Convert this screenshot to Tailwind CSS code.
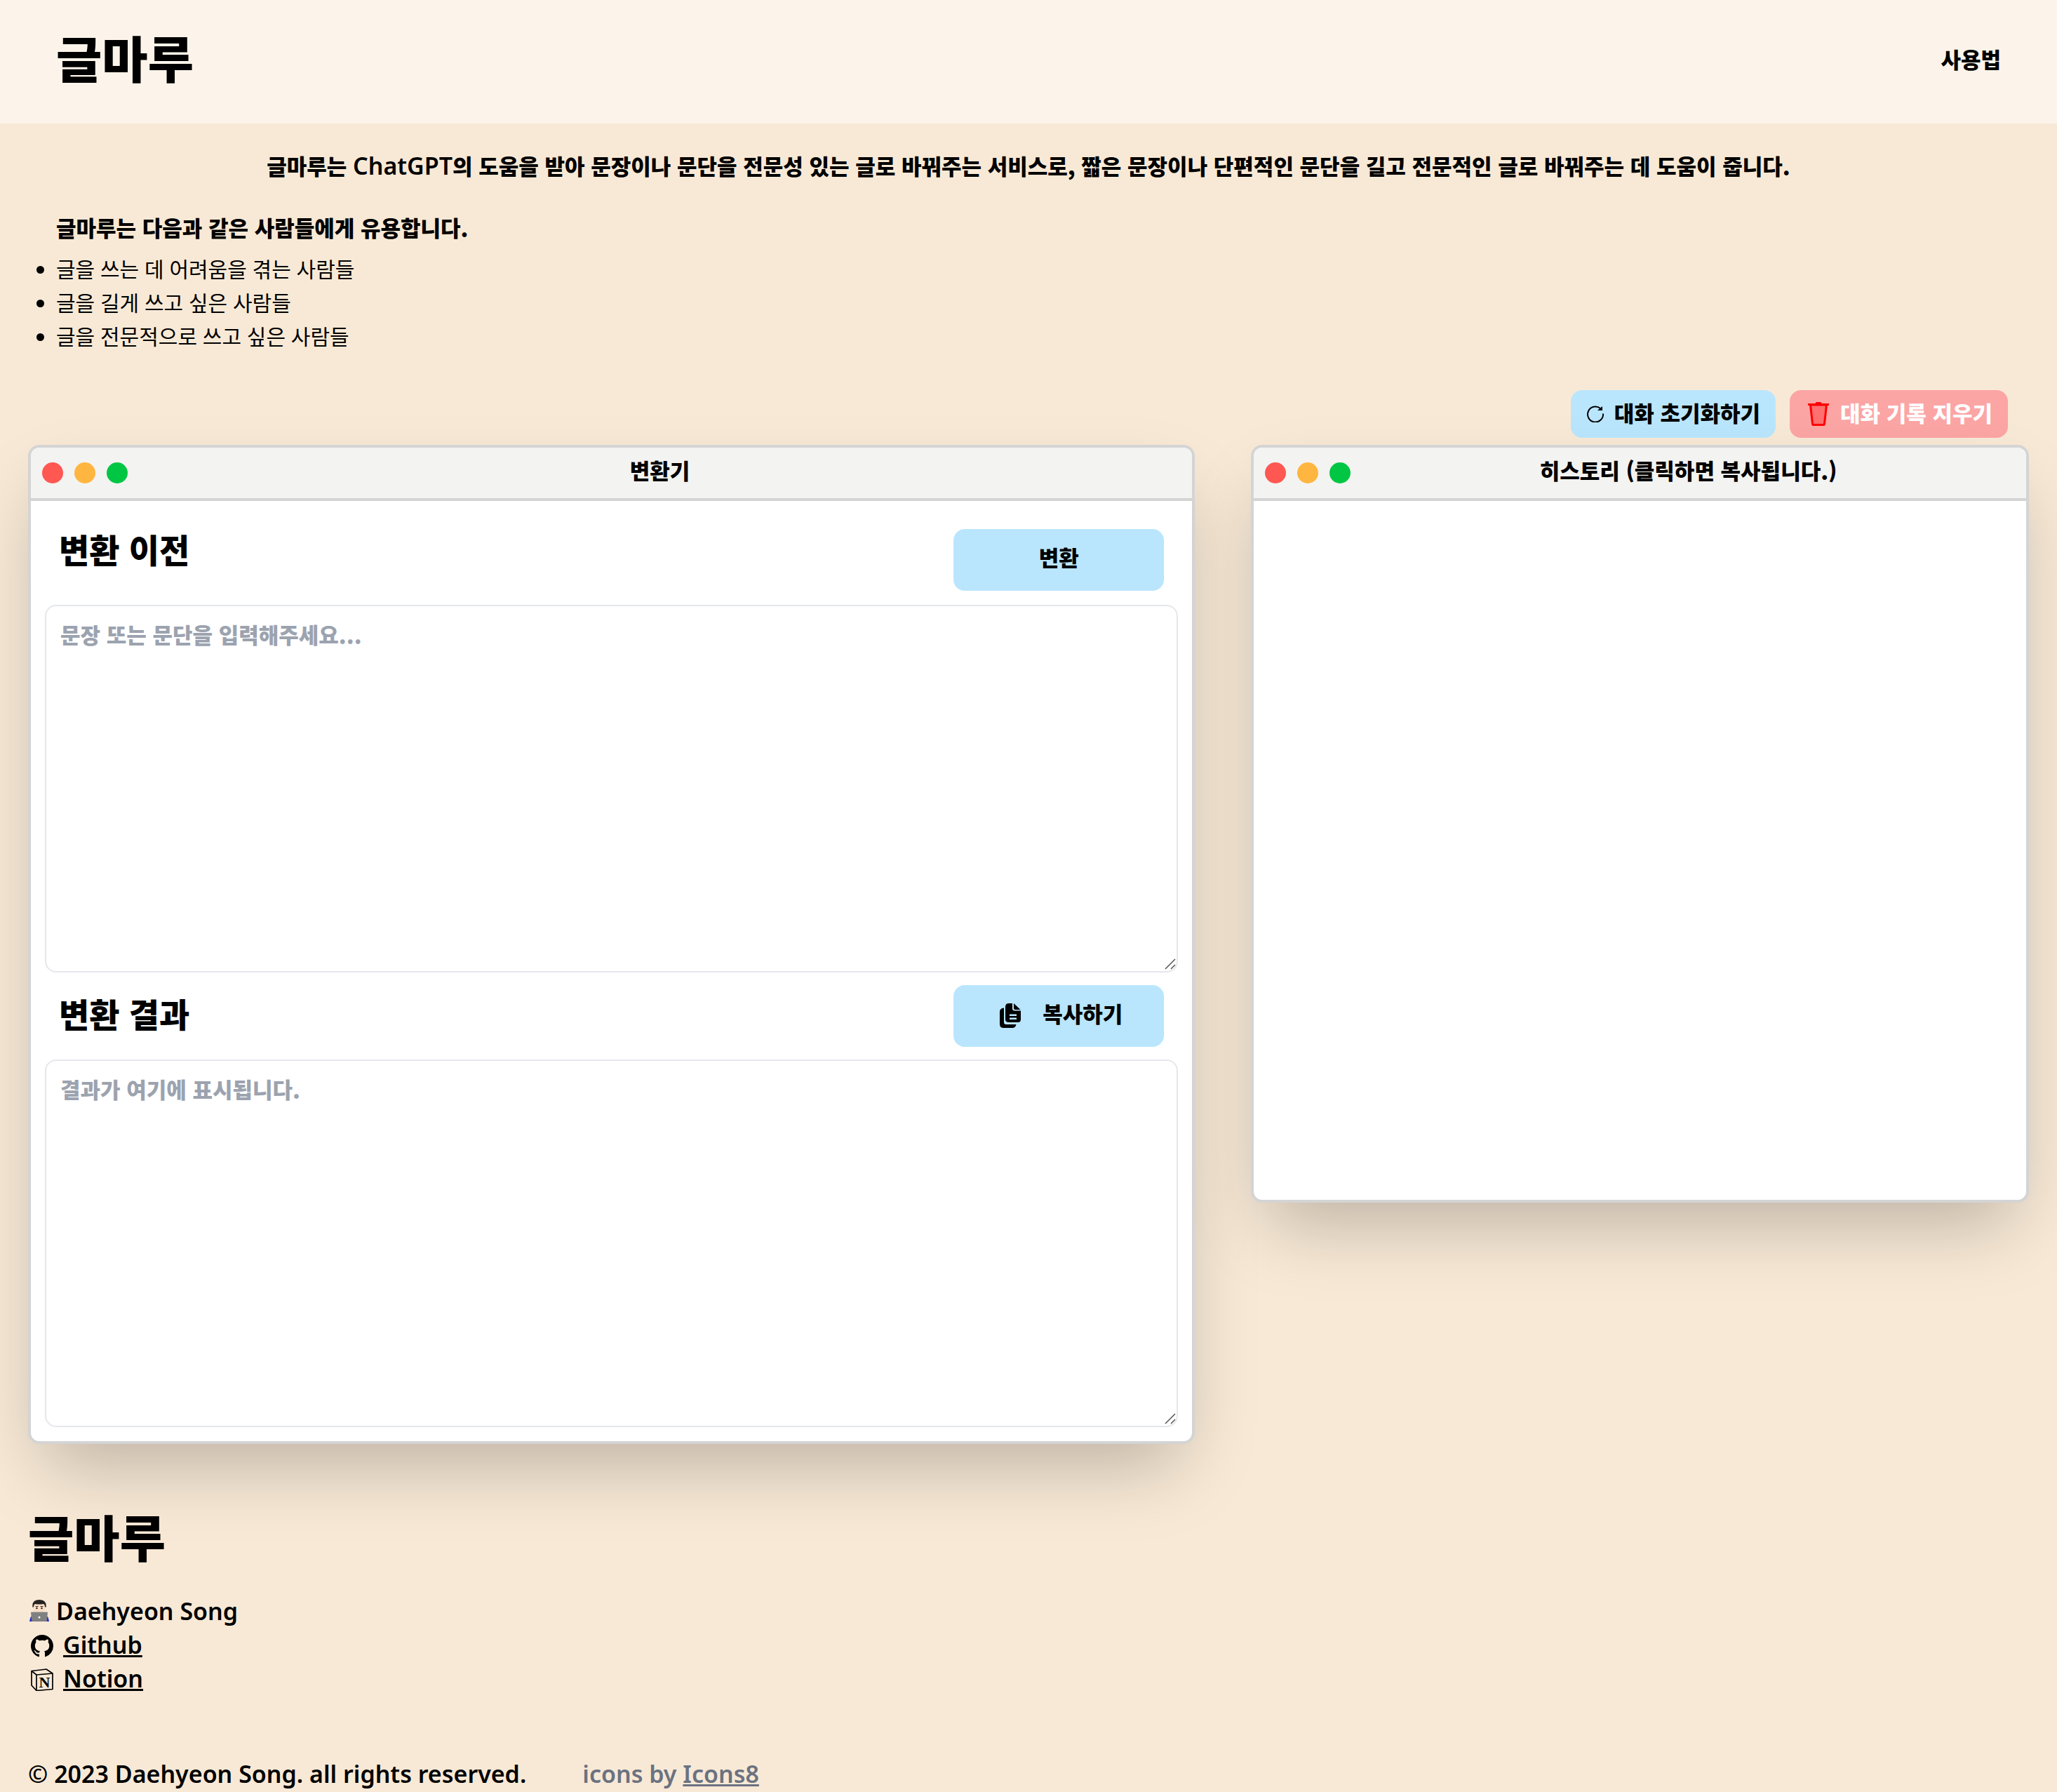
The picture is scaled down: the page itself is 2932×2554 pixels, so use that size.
<!DOCTYPE html>
<html lang="ko">
<head>
<meta charset="utf-8">
<meta name="viewport" content="width=device-width, initial-scale=1">
<title>글마루</title>
<script src="https://cdn.jsdelivr.net/npm/@tailwindcss/browser@4"></script>
</head>
<body class="min-h-screen bg-[#f8e9d6] text-[31px] leading-[48px] font-black text-black font-['Noto_Sans_CJK_KR',sans-serif]">

<header class="flex items-center justify-between bg-[#fcf4ea] px-20 pt-10 pb-14">
  <h1 class="text-[71px] leading-[80px]">글마루</h1>
  <nav class="pt-2"><a href="#usage">사용법</a></nav>
</header>

<main class="px-10 pt-9">
  <p class="text-center">글마루는 <span class="text-[34px] leading-none font-semibold font-['Noto_Sans',sans-serif]">ChatGPT</span>의 도움을 받아 문장이나 문단을 전문성 있는 글로 바꿔주는 서비스로, 짧은 문장이나 단편적인 문단을 길고 전문적인 글로 바꿔주는 데 도움이 줍니다.</p>

  <section class="pt-10">
    <h2 class="px-10">글마루는 다음과 같은 사람들에게 유용합니다.</h2>
    <ul class="list-disc pt-3 pl-10 text-[30px] font-normal font-['Noto_Sans','Noto_Sans_CJK_KR',sans-serif]">
      <li>글을 쓰는 데 어려움을 겪는 사람들</li>
      <li>글을 길게 쓰고 싶은 사람들</li>
      <li>글을 전문적으로 쓰고 싶은 사람들</li>
    </ul>
  </section>

  <div class="flex justify-end gap-5 pt-13 pr-[30px] pb-[10px]">
    <button type="button" class="flex items-center gap-3 rounded-2xl bg-[#bae6fd] px-[22px] pt-2 pb-3">
      <svg class="mt-1 h-6 w-7" viewBox="1 0 28 24" fill="none" aria-hidden="true">
        <path d="M25 11.5A11 11 0 1 1 21 4" stroke="#000" stroke-width="2"/>
        <path d="M24 1v6h-7z" fill="#000"/>
      </svg>
      대화 초기화하기
    </button>
    <button type="button" class="flex items-center gap-4 rounded-2xl bg-[#fca5a5] px-[22px] pt-2 pb-3 text-white">
      <svg class="mt-1 ml-1 h-[34px] w-[30px]" viewBox="0 0 30 34" aria-hidden="true">
        <path d="M3.5 4 6.5 31q.2 1.500 1.700 1.500h13.600q1.500 0 1.700-1.500L26.500 4z" fill="#ff7070" stroke="#f00" stroke-width="3"/>
        <path d="M0 2h10.500q.5-2 2-2h5q1.500 0 2 2H30v3H0z" fill="#f00"/>
      </svg>
      대화 기록 지우기
    </button>
  </div>

  <div class="grid grid-cols-[3fr_2fr] items-start gap-20">
    <section class="rounded-2xl border-4 border-[#d4d4d4] bg-white shadow-[0_50px_100px_-24px_rgb(0_0_0/0.25)]">
      <div class="flex items-center gap-4 rounded-t-xl border-b-4 border-[#d4d4d4] bg-[#f3f3f1] px-4 py-3">
        <span class="size-[30px] rounded-full bg-[#ff5751]"></span>
        <span class="size-[30px] rounded-full bg-[#ffb640]"></span>
        <span class="size-[30px] rounded-full bg-[#00c644]"></span>
        <h2 class="flex-1 pb-2 text-center leading-[40px]">변환기</h2>
      </div>
      <div class="px-5 pt-10 pb-5">
        <div class="flex items-start justify-between px-5">
          <label for="source" class="text-[47px] leading-[56px]">변환 이전</label>
          <button type="button" class="h-[88px] w-[300px] rounded-2xl bg-[#bae6fd] pb-2">변환</button>
        </div>
        <div class="relative mt-5">
          <textarea id="source" class="block h-[524px] w-full rounded-2xl border-2 border-[#e5e7eb] px-5 py-4 placeholder:text-[#9ca3af] [&::-webkit-resizer]:bg-transparent" placeholder="문장 또는 문단을 입력해주세요..."></textarea>
          <svg class="pointer-events-none absolute right-[3px] bottom-1 size-4" viewBox="0 0 16 16" fill="none" stroke="#555" stroke-width="1.500" aria-hidden="true"><path d="M1 15 15 1M9 15l6-6"/></svg>
        </div>
        <div class="mt-[18px] flex items-center justify-between px-5">
          <label for="result" class="pb-2 text-[47px] leading-[56px]">변환 결과</label>
          <button type="button" class="flex h-[88px] w-[300px] items-center justify-center gap-7 rounded-2xl bg-[#bae6fd] pb-2">
            <svg class="mt-2 h-[36px] w-10" viewBox="-7 0 40 36" aria-hidden="true">
              <path d="M6 6.500v20.500q0 3 3 3h14.500q-1 5-5.500 5H5.500Q0 35 0 29.500V12q0-5 6-5.500z"/>
              <path d="M13 0h5v7.500q0 3 3 3h9V23q0 4-4 4H13q-5 0-5-4V5q0-5 5-5z"/>
              <path d="M20 0 29.500 9H22q-2 0-2-2z"/>
              <path d="M14 15.500h10v2.500H14zM14 20.500h10v2.500H14z" fill="#bae6fd"/>
            </svg>
            복사하기
          </button>
        </div>
        <div class="relative mt-[18px]">
          <textarea id="result" class="block h-[524px] w-full rounded-2xl border-2 border-[#e5e7eb] px-5 py-4 placeholder:text-[#9ca3af] [&::-webkit-resizer]:bg-transparent" placeholder="결과가 여기에 표시됩니다."></textarea>
          <svg class="pointer-events-none absolute right-[3px] bottom-1 size-4" viewBox="0 0 16 16" fill="none" stroke="#555" stroke-width="1.500" aria-hidden="true"><path d="M1 15 15 1M9 15l6-6"/></svg>
        </div>
      </div>
    </section>

    <section class="rounded-2xl border-4 border-[#d4d4d4] bg-white shadow-[0_50px_100px_-24px_rgb(0_0_0/0.25)]">
      <div class="flex items-center gap-4 rounded-t-xl border-b-4 border-[#d4d4d4] bg-[#f3f3f1] px-4 py-3">
        <span class="size-[30px] rounded-full bg-[#ff5751]"></span>
        <span class="size-[30px] rounded-full bg-[#ffb640]"></span>
        <span class="size-[30px] rounded-full bg-[#00c644]"></span>
        <h2 class="flex-1 pb-2 text-center leading-[40px]">히스토리 (클릭하면 복사됩니다.)</h2>
      </div>
      <div class="h-[996px]"></div>
    </section>
  </div>
</main>

<footer class="px-10 pt-[90px] text-[34px] font-semibold font-['Noto_Sans',sans-serif]">
  <h2 class="text-[71px] leading-[80px] font-black font-['Noto_Sans_CJK_KR',sans-serif]">글마루</h2>
  <ul class="pt-11">
    <li class="flex items-center gap-2">
      <svg class="h-8 w-8" viewBox="0 0 32 32" aria-hidden="true">
        <path d="M2 31q1-8 5-9h18q4 1 5 9z" fill="#2a33c8"/>
        <path d="M12 16h8v5h-8z" fill="#e3bfa3"/>
        <ellipse cx="16" cy="11" rx="9" ry="9.500" fill="#f9dfc8"/>
        <path d="M6.500 11Q5 0 16 0t9.500 11l-1.500-1q0-3-2-4-6 1-12 0-2 1-2 4z" fill="#262220"/>
        <circle cx="12.500" cy="12" r="1.300" fill="#4a2a1c"/><circle cx="19.500" cy="12" r="1.300" fill="#4a2a1c"/>
        <path d="M10.500 9.500h4M17.500 9.500h4" stroke="#33241d"/>
        <path d="M5 17.500h22q1 0 1 1L26.500 31h-21L4 18.500q0-1 1-1z" fill="#808083"/>
        <circle cx="16" cy="25" r="1.500" fill="#f4f4f4"/>
      </svg>
      Daehyeon Song
    </li>
    <li class="flex items-center gap-[14px] pl-1">
      <svg class="mt-1 size-8" viewBox="0 0 16 16" aria-hidden="true"><path d="M8 0C3.580 0 0 3.580 0 8c0 3.540 2.290 6.530 5.470 7.590.4.070.55-.17.55-.38 0-.19-.01-.82-.01-1.490-2.010.37-2.530-.49-2.690-.94-.09-.23-.48-.94-.82-1.130-.28-.15-.68-.52-.01-.53.63-.01 1.080.58 1.230.82.72 1.210 1.870.87 2.330.66.07-.52.28-.87.51-1.070-1.780-.2-3.640-.89-3.640-3.950 0-.87.31-1.590.82-2.150-.08-.2-.36-1.020.08-2.120 0 0 .67-.21 2.200.82.64-.18 1.320-.27 2-.27s1.360.09 2 .27c1.530-1.040 2.200-.82 2.200-.82.44 1.100.16 1.920.08 2.120.51.56.82 1.270.82 2.150 0 3.070-1.870 3.750-3.650 3.950.29.25.54.73.54 1.480 0 1.070-.01 1.930-.01 2.200 0 .21.15.46.55.38A8.010 8.010 0 0 0 16 8c0-4.420-3.580-8-8-8z"/></svg>
      <a href="#github" class="underline decoration-3 underline-offset-2">Github</a>
    </li>
    <li class="flex items-center gap-[14px] pl-1">
      <svg class="mt-1 size-8" viewBox="0 0 32 32" aria-hidden="true">
        <path d="M1 3.500 22 1l9 6v22.500L8 31.500 1 24z" fill="none" stroke="#000" stroke-width="1.700" stroke-linejoin="round"/>
        <path d="M1 3.500 8 9v22.500M8 9l23-2" fill="none" stroke="#000" stroke-width="1.700" stroke-linejoin="round"/>
        <text x="19.500" y="27" text-anchor="middle" font-size="22" class="font-bold font-['Liberation_Serif',serif]">N</text>
      </svg>
      <a href="#notion" class="underline decoration-3 underline-offset-2">Notion</a>
    </li>
  </ul>
  <div class="flex gap-20 pt-22">
    <p>© 2023 Daehyeon Song. all rights reserved.</p>
    <p class="text-[#6b7280]">icons by <a href="#icons8" class="underline decoration-3 underline-offset-2">Icons8</a></p>
  </div>
</footer>
</body>
</html>
